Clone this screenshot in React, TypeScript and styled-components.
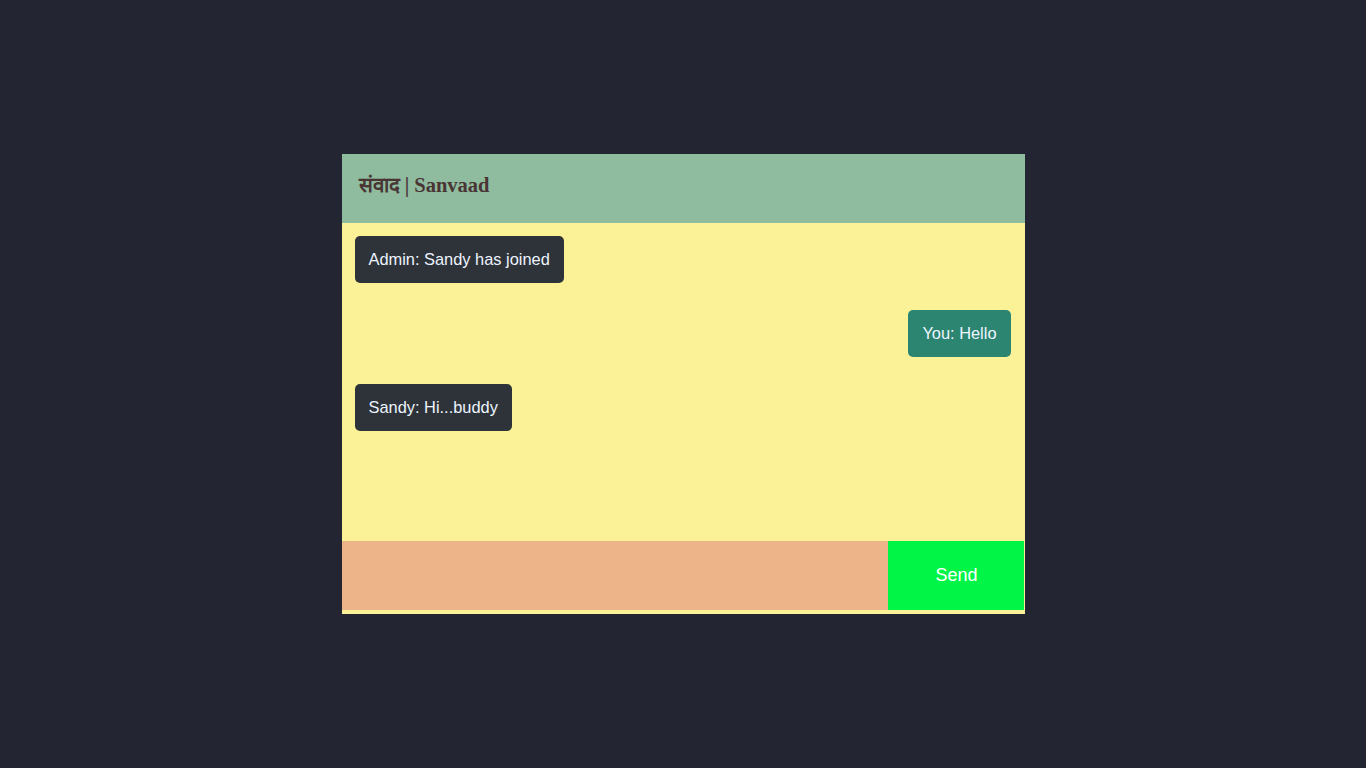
import React from "react";
import styled, { createGlobalStyle } from "styled-components";

const Global = createGlobalStyle`
  html, body { margin: 0; padding: 0; background: #232632; }
  body { font-family: "Liberation Sans", Arial, sans-serif; }
`;

const Page = styled.div`
  min-height: 768px;
  display: flex;
  align-items: flex-start;
  justify-content: center;
  padding-top: 154px;
  box-sizing: border-box;
`;

const Card = styled.div`
  width: 683px;
  height: 460px;
  background: #fbf197;
  display: flex;
  flex-direction: column;
`;

const Header = styled.div`
  height: 69px;
  background: #8fbc9f;
  display: flex;
  align-items: center;
  padding: 0 0 10px 17px;
  box-sizing: border-box;
`;

const Title = styled.h1`
  margin: 0;
  font-family: "Liberation Serif", "Times New Roman", serif;
  font-weight: bold;
  font-size: 20.5px;
  color: #4a3535;
`;

const Messages = styled.div`
  height: 318px;
  padding: 13px 14px 0 13px;
  box-sizing: border-box;
  display: flex;
  flex-direction: column;
  gap: 27px;
`;

const Bubble = styled.div<{ $mine?: boolean }>`
  align-self: ${(p) => (p.$mine ? "flex-end" : "flex-start")};
  background: ${(p) => (p.$mine ? "#2b8571" : "#2d3339")};
  color: #eef4ff;
  font-size: 16.4px;
  line-height: 19px;
  padding: 14px 14px;
  border-radius: 5px;
`;

const Form = styled.form`
  display: flex;
  height: 69px;
  width: 682px;
  margin: 0;
`;

const Input = styled.input`
  flex: 0 0 546px;
  border: none;
  outline: none;
  background: #edb48a;
  padding: 0 12px;
  font-size: 16px;
  box-sizing: border-box;
`;

const SendButton = styled.button`
  flex: 1;
  border: none;
  background: #00f546;
  color: #ffffff;
  font-family: "Liberation Sans", Arial, sans-serif;
  font-size: 18px;
  padding: 0 0 0 2px;
  cursor: pointer;
`;

export default function App() {
  return (
    <>
      <Global />
      <Page>
        <Card>
          <Header>
            <Title>संवाद | Sanvaad</Title>
          </Header>
          <Messages>
            <Bubble>Admin: Sandy has joined</Bubble>
            <Bubble $mine>You: Hello</Bubble>
            <Bubble>Sandy: Hi...buddy</Bubble>
          </Messages>
          <Form onSubmit={(e) => e.preventDefault()}>
            <Input type="text" />
            <SendButton type="submit">Send</SendButton>
          </Form>
        </Card>
      </Page>
    </>
  );
}
